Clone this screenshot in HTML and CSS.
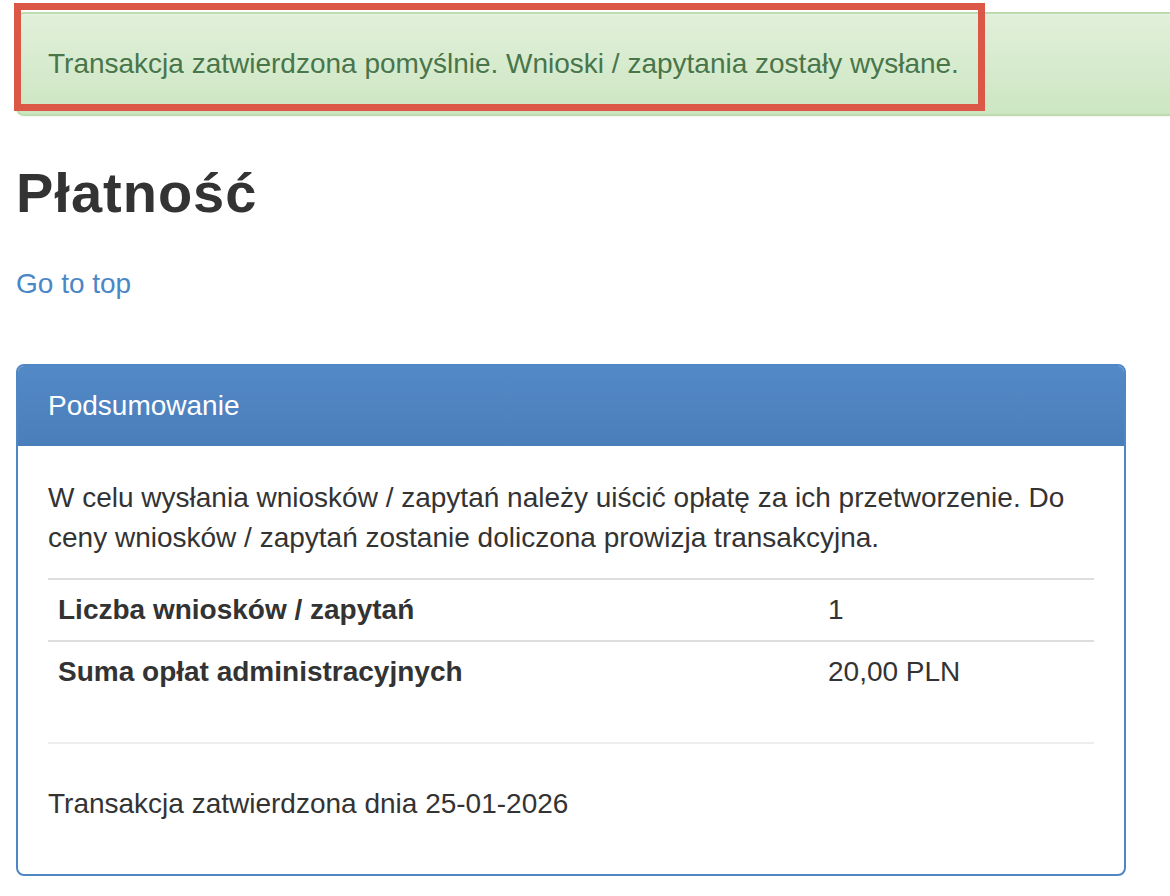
FILE: index.html
```html
<!DOCTYPE html>
<html lang="pl">
<head>
<meta charset="utf-8">
<title>Płatność</title>
<link rel="stylesheet" href="styles.css">
</head>
<body>
<div class="page">
  <div class="alert-wrap">
    <div class="alert">Transakcja zatwierdzona pomyślnie. Wnioski / zapytania zostały wysłane.</div>
    <div class="annot"></div>
  </div>
  <h1 class="title">Płatność</h1>
  <a class="gototop" href="#">Go to top</a>
  <div class="panel">
    <div class="panel-heading">Podsumowanie</div>
    <div class="panel-body">
      <p class="intro">W celu wysłania wniosków / zapytań należy uiścić opłatę za ich przetworzenie. Do ceny wniosków / zapytań zostanie doliczona prowizja transakcyjna.</p>
      <table class="summary">
        <colgroup><col class="c-label"><col class="c-value"></colgroup>
        <tbody>
          <tr><th>Liczba wniosków / zapytań</th><td>1</td></tr>
          <tr><th>Suma opłat administracyjnych</th><td>20,00 PLN</td></tr>
        </tbody>
      </table>
      <hr class="sep">
      <p class="date">Transakcja zatwierdzona dnia 25-01-2026</p>
    </div>
  </div>
</div>
</body>
</html>
```
FILE: styles.css
```css
html, body {
  margin: 0;
  padding: 0;
  background: #fff;
}
body {
  font-family: "Liberation Sans", Arial, Helvetica, sans-serif;
  font-size: 28px;
  line-height: 40px;
  color: #333;
  overflow: hidden;
}
.page {
  padding: 12px 44px 0 16px;
}
.alert-wrap {
  position: relative;
  margin-right: -44px;
}
.alert {
  border: 2px solid #bcdcae;
  border-right: 0;
  border-radius: 8px 0 0 8px;
  padding: 30px;
  line-height: 40px;
  color: #48754a;
  background: linear-gradient(to bottom, #e1f0da 0%, #cde6c2 100%);
  text-shadow: 0 1px 0 rgba(255, 255, 255, .2);
  box-shadow: inset 0 1px 0 rgba(255, 255, 255, .25), 0 1px 2px rgba(0, 0, 0, .05);
}
.annot {
  position: absolute;
  left: -2px;
  top: -9px;
  width: 971px;
  height: 108px;
  box-sizing: border-box;
  border: 7.5px solid #dc5846;
}
.title {
  margin: 46px 0 40px;
  font-size: 56px;
  line-height: 62px;
  font-weight: bold;
  letter-spacing: 1px;
  color: #333;
}
.gototop {
  display: block;
  width: max-content;
  color: #4a87c6;
  text-decoration: none;
  line-height: 40px;
  margin-bottom: 60px;
}
.panel {
  border: 2px solid #4f86c4;
  border-radius: 8px;
  overflow: hidden;
}
.panel-heading {
  padding: 20px 30px;
  line-height: 40px;
  color: #fff;
  background: linear-gradient(to bottom, #5389c7 0%, #4a7ebb 100%);
}
.panel-body {
  padding: 32px 30px 30px;
}
.intro {
  margin: 0 0 20px;
}
.summary {
  width: 100%;
  border-collapse: collapse;
  table-layout: fixed;
  margin-bottom: 40px;
}
.c-label {
  width: 770px;
}
.summary th,
.summary td {
  text-align: left;
  padding: 10px;
  border-top: 2px solid #ddd;
  line-height: 40px;
}
.summary th {
  font-weight: bold;
}
.sep {
  border: 0;
  border-top: 2px solid #eee;
  margin: 0 0 40px;
}
.date {
  margin: 0 0 20px;
}
```
